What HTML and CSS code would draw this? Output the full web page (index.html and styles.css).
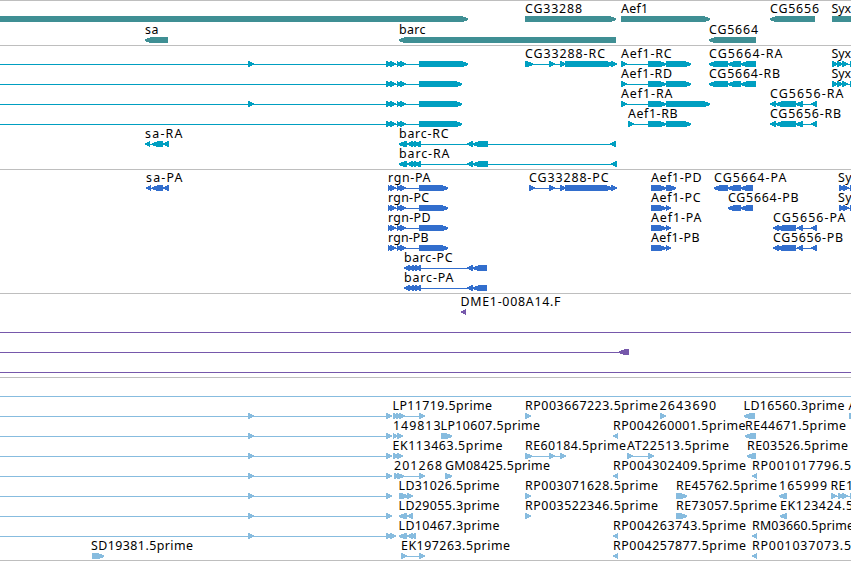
FILE: index.html
```html
<!DOCTYPE html>
<html lang="en">
<head>
<meta charset="utf-8">
<title>Genome browser</title>
<link rel="stylesheet" href="styles.css">
</head>
<body>
<main class="browser" id="browser"></main>
<script src="tracks.js"></script>
</body>
</html>
```
FILE: styles.css
```css
body {
  margin: 0;
  background: #fff;
  overflow: hidden;
}

.browser {
  display: flex;
  flex-direction: column;
  width: 851px;
  height: 560px;
  border-bottom: 1px solid #bebebe;
}

.track {
  border-top: 1px solid #bebebe;
  overflow: hidden;
}

.track svg {
  display: block;
}

.shape {
  fill: currentColor;
  shape-rendering: crispEdges;
}

.label {
  fill: #000;
  font-family: "Noto Sans", "DejaVu Sans", sans-serif;
  font-size: 12.4px;
}

.genes { color: #3f8f94; }
.transcripts { color: #009fc1; }
.proteins { color: #326ecd; }
.clones { color: #7658ab; }
.ests { color: #87bcdf; }
```
FILE: tracks.js
```js
// Row: [centre y, label baseline, labels, feature groups]
// Label: [text, left, right]
// Group: [direction, line start, line end, exon spans]; a null line start draws no line
const rgn = (last, first) => [1, 0, 440, [...(first ? [[248, 254]] : []), [386, 392], [390, 396], [397, 402], [400, 406], [419, last]]];
const est = (extra) => [1, 0, 391, [[248, 254], [386, 392], ...(extra || [])]];
const one = (dir, a, b) => [dir, null, 0, [[a, b]]];
const cg64 = [-1, 712, 756, [[709, 728], [728, 741], [741, 756]]];
const cg56 = [-1, 771, 817, [[770, 776], [776, 796], [796, 803], [811, 817]]];
const cg56p = [-1, 774, 817, [[773, 779], [777, 796], [797, 803], [811, 817]]];
const syx = [1, 832, 851, [[832, 838], [837, 843], [842, 848], [850, 856]]];
const syxp = [1, 839, 851, [[839, 845], [843, 849], [850, 856]]];
const rgnp = [1, 389, 440, [[388, 393], [390, 396], [397, 402], [400, 406], [419, 448]]];
const barc = (end) => [-1, 401, end, [[399, 407], [407, 413], [410, 416], [414, 421], [467, 473], [473, 488], [end - 6, end]]];
const barcp = [-1, 406, 487, [[404, 410], [408, 414], [411, 417], [415, 421], [467, 473], [473, 487]]];

const tracks = [
  ["genes", 1, 44, [
    [19, 13, [["CG33288", 525, 582], ["Aef1", 621, 648], ["CG5656", 770, 819], ["Syx", 831.5, 851]],
      [one(1, 0, 468), one(1, 525, 616), one(1, 621, 710), one(-1, 770, 815), one(1, 832, 870)]],
    [40, 34, [["sa", 145, 158.5], ["barc", 399, 425.5], ["CG5664", 709, 758]],
      [one(-1, 145, 168), one(-1, 399, 616), one(-1, 709, 756)]]
  ]],
  ["transcripts", 46, 123, [
    [64, 58, [["CG33288-RC", 525, 605], ["Aef1-RC", 621, 671.5], ["CG5664-RA", 709, 782.5], ["Syx", 831.5, 851]],
      [rgn(468, true), [1, 525, 614, [[525, 533], [549, 555], [560, 566], [565, 613], [611, 617]]],
       [1, 621, 670, [[621, 627], [648, 654], [650, 666], [666, 691]]], cg64, syx]],
    [84, 78, [["Aef1-RD", 621, 672], ["CG5664-RB", 709, 780], ["Syx", 831.5, 851]],
      [rgn(462), [1, 621, 670, [[621, 627], [648, 666], [666, 691]]], cg64, syx]],
    [104, 98, [["Aef1-RA", 621, 672.5], ["CG5656-RA", 770, 843.5]],
      [rgn(462, true), [1, 621, 670, [[621, 627], [648, 666], [666, 710]]], cg56]],
    [124, 118, [["Aef1-RB", 628, 677.5], ["CG5656-RB", 770, 841]],
      [rgn(462), [1, 628, 670, [[628, 634], [648, 666], [666, 691]]], cg56]],
    [144, 138, [["sa-RA", 145, 182.5], ["barc-RC", 399, 448.5]],
      [[-1, 147, 168, [[145, 150], [152, 163], [163, 169]]], barc(616)]],
    [164, 158, [["barc-RA", 399, 449.5]], [barc(617)]]
  ]],
  ["proteins", 170, 123, [
    [188, 182, [["sa-PA", 146, 182.5], ["rgn-PA", 388, 430.5], ["CG33288-PC", 529, 608.5], ["Aef1-PD", 651, 701.5], ["CG5664-PA", 714, 786.5], ["Sy", 838, 851.5]],
      [[-1, 148, 168, [[146, 151], [152, 163], [163, 169]]], rgnp,
       [1, 529, 614, [[529, 535], [549, 555], [560, 566], [565, 612], [611, 617]]],
       [1, 651, 670, [[651, 666], [666, 676]]],
       [-1, 717, 750, [[714, 728], [728, 741], [741, 753]]], syxp]],
    [208, 202, [["rgn-PC", 388, 429], ["Aef1-PC", 651, 700.5], ["CG5664-PB", 728, 798.5], ["Sy", 838, 851.5]],
      [rgnp, [1, 651, 669, [[651, 666], [666, 671]]], [-1, 731, 750, [[728, 741], [741, 753]]], syxp]],
    [228, 222, [["rgn-PD", 388, 430.5], ["Aef1-PA", 651, 701.5], ["CG5656-PA", 773, 845.5]],
      [rgnp, [1, 651, 669, [[651, 666], [666, 671]]], cg56p]],
    [248, 242, [["rgn-PB", 388, 428.5], ["Aef1-PB", 651, 699.5], ["CG5656-PB", 773, 843]],
      [rgnp, [1, 651, 669, [[651, 666], [666, 671]]], cg56p]],
    [268, 262, [["barc-PC", 404, 452.5]], [barcp]],
    [288, 282, [["barc-PA", 404, 453.5]], [barcp]]
  ]],
  ["clones", 294, 83, [
    [312, 306, [["DME1-008A14.F", 460.5, 560.5]], [one(-1, 461, 466)]],
    [332, 0, [], [[1, 0, 851, []]]],
    [352, 0, [], [[-1, 0, 625, [[619, 629]]]]],
    [372, 0, [], [[1, 0, 851, []]]]
  ]],
  ["ests", 378, 182, [
    [396, 0, [], [[1, 0, 851, []]]],
    [416, 410, [["LP11719.5prime", 392.5, 492], ["RP003667223.5prime", 525, 658], ["2643690", 659.5, 716], ["LD16560.3prime", 743.5, 844.5], ["A", 848.5, 857]],
      [est(), [1, 394, 422, [[393, 399], [396, 402], [399, 405], [419, 425]]], one(1, 525, 531), one(1, 660, 666), one(-1, 744, 755), one(1, 849, 855)]],
    [436, 430, [["149813", 393, 440.5], ["LP10607.5prime", 440.5, 540], ["RP004260001.5prime", 613, 745.5], ["RE44671.5prime", 745, 846]],
      [est(), [1, 393, 400, [[393, 398], [397, 403]]], one(1, 441, 452), one(-1, 613, 618), one(-1, 745, 756)]],
    [456, 450, [["EK113463.5prime", 392.5, 502.5], ["RE60184.5prime", 525, 626], ["AT22513.5prime", 627, 729], ["RE03526.5prime", 747, 848]],
      [est(), [1, 393, 400, [[393, 399], [397, 403]]], [1, 525, 563, [[525, 532], [549, 555], [560, 566]]], [1, 627, 651, [[627, 633], [648, 654]]], one(-1, 747, 756)]],
    [476, 470, [["201268", 394, 442], ["GM08425.5prime", 445, 550], ["RP004302409.5prime", 613, 746], ["RP001017796.5", 752, 851]],
      [est(), [1, 394, 422, [[394, 400], [397, 404], [419, 425]]], one(1, 445, 452), one(-1, 613, 618), one(-1, 752, 757)]],
    [496, 490, [["LD31026.5prime", 398.5, 499.5], ["RP003071628.5prime", 525, 658], ["RE45762.5prime", 676, 777], ["165999", 779, 827], ["RE1", 830.5, 853]],
      [est(), [1, 400, 411, [[399, 408], [407, 413]]], one(1, 525, 531), one(1, 676, 687), one(-1, 779, 787), [1, 831, 851, [[831, 837], [838, 844], [842, 848], [850, 856]]]]],
    [516, 510, [["LD29055.3prime", 398.5, 499.5], ["RP003522346.5prime", 525, 658], ["RE73057.5prime", 676, 777], ["EK123424.5", 780, 853]],
      [est(), [-1, 402, 411, [[399, 407], [407, 413]]], one(1, 525, 531), one(1, 676, 687), one(-1, 780, 787)]],
    [536, 530, [["LD10467.3prime", 398.5, 499.5], ["RP004263743.5prime", 613, 746], ["RM03660.5prime", 752, 854]],
      [est([[390, 396]]), [-1, 402, 414, [[399, 407], [407, 413], [410, 416]]], one(-1, 613, 618), one(-1, 752, 757)]],
    [556, 550, [["SD19381.5prime", 91, 193], ["EK197263.5prime", 401, 510], ["RP004257877.5prime", 613, 746], ["RP001037073.5", 752, 851]],
      [one(1, 92, 104), [1, 401, 422, [[401, 407], [419, 425]]], one(-1, 613, 618), one(-1, 752, 757)]]
  ]]
];

// Exon drawn as a bar that steps down to a blunt tip, one step for each column
function exon(a, b, y, dir) {
  const cols = b - a > 6
    ? [[-3, 3], [-2, 3], [-2, 2], [-2, 2], [-1, 2], [-1, 1]]
    : [[-3, 3], [-2, 2], [-2, 2], [-1, 1], [-1, 1]];
  const n = cols.length;
  const body = dir > 0 ? b - n : a + n;
  let d = b - a > n ? `M${dir > 0 ? a : b} ${y - 3}H${body}V${y + 3}H${dir > 0 ? a : b}Z` : "";
  cols.forEach(([t, u], i) => {
    const x = dir > 0 ? body + i : body - i - 1;
    d += `M${x} ${y + t}h1V${y + u}h-1Z`;
  });
  return d;
}

document.getElementById("browser").innerHTML = tracks.map(([name, top, height, rows]) => {
  let out = "";
  for (const [y, base, labels, groups] of rows) {
    for (const [dir, start, end, spans] of groups) {
      if (start !== null) out += `<rect class="shape" x="${start}" y="${y}" width="${end - start}" height="1"/>`;
      for (const [a, b] of spans) out += `<path class="shape" d="${exon(a, b, y, dir)}"/>`;
    }
    for (const [text, left, right] of labels) {
      out += `<text class="label" x="${left}" y="${base}" textLength="${right - left}">${text}</text>`;
    }
  }
  return `<section class="track ${name}"><svg width="851" height="${height}" viewBox="0 ${top} 851 ${height}">${out}</svg></section>`;
}).join("");
```
